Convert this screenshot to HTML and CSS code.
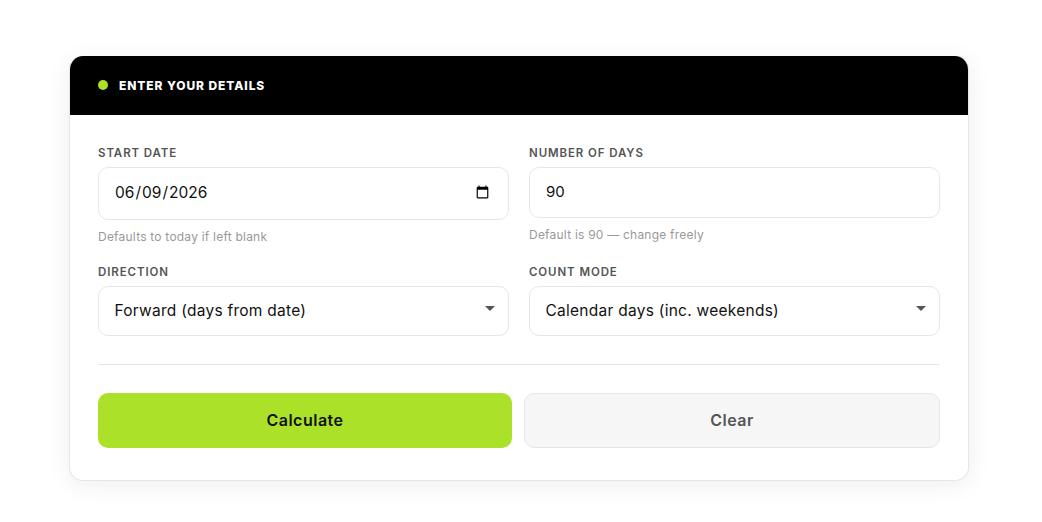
FILE: index.html
```html
<!DOCTYPE html>
<html lang="en">

<head>
    <meta charset="UTF-8">
    <meta name="viewport" content="width=device-width, initial-scale=1.0">
    <title>Date Calculator</title>
    <link rel="stylesheet" href="styles.css">
</head>

<body>

    <div class="card">
        <!-- Card Header -->
        <div class="card-header">
            <span class="dot"></span>
            <h2>Enter Your Details</h2>
        </div>

        <div class="card-body">
            <!-- Form Fields -->
            <div class="form-grid">
                <div class="field">
                    <label for="start-date">Start Date</label>
                    <input type="date" id="start-date" class="date-input" value="2026-06-09">
                    <p class="hint">Defaults to today if left blank</p>
                </div>
                <div class="field">
                    <label for="num-days">Number of Days</label>
                    <input type="number" id="num-days" class="num-input" value="90">
                    <p class="hint">Default is 90 — change freely</p>
                </div>
                <div class="field">
                    <label for="direction">Direction</label>
                    <div class="select-wrap">
                        <select id="direction">
                            <option>Forward (days from date)</option>
                            <option>Backward (days before date)</option>
                        </select>
                    </div>
                </div>
                <div class="field">
                    <label for="count-mode">Count Mode</label>
                    <div class="select-wrap">
                        <select id="count-mode">
                            <option>Calendar days (inc. weekends)</option>
                            <option>Business days (exc. weekends)</option>
                        </select>
                    </div>
                </div>
            </div>

            <hr class="divider">

            <!-- Actions -->
            <div class="actions">
                <button class="btn btn-calc">Calculate</button>
                <button class="btn btn-clear">Clear</button>
            </div>
        </div>
    </div>

</body>

</html>
```

FILE: styles.css
```css
/* General Styles */
body {
    font-family: Inter, "Liberation Sans", sans-serif;
    margin: 0;
    padding: 56px 0 40px 69px;
    background-color: #fff;
    color: #111;
}

/* Card */
.card {
    width: 898px;
    background-color: #fff;
    border: 1px solid #e6e6e6;
    border-top: none;
    border-radius: 14px;
    box-shadow: 0 4px 24px rgba(0, 0, 0, 0.07);
    overflow: hidden;
}

.card-header {
    display: flex;
    align-items: center;
    gap: 11px;
    height: 59px;
    padding: 0 28px;
    background-color: #000;
}

.card-header h2 {
    margin: 0;
    color: #fff;
    font-size: 12px;
    font-weight: 800;
    letter-spacing: 0.9px;
    text-transform: uppercase;
}

.dot {
    width: 10px;
    height: 10px;
    margin-top: -1px;
    border-radius: 50%;
    background-color: #abe128;
}

.card-body {
    padding: 31px 28px 32px;
}

/* Form */
.form-grid {
    display: grid;
    grid-template-columns: 411px 411px;
    column-gap: 20px;
    row-gap: 20px;
}

.field label {
    display: block;
    margin-bottom: 7px;
    color: #555;
    font-size: 11.5px;
    line-height: 14px;
    font-weight: 600;
    letter-spacing: 0.9px;
    text-transform: uppercase;
}

.field input,
.field select {
    display: block;
    box-sizing: border-box;
    width: 100%;
    height: 53px;
    padding: 0 16px 2px;
    border: 1px solid #e6e6e6;
    border-radius: 10px;
    background-color: #fff;
    color: #111;
    font-family: inherit;
    font-size: 15px;
}

.field .date-input {
    padding-left: 15px;
    font-size: 15.5px;
}

.field .num-input {
    height: 51px;
}

.field select {
    height: 50px;
    padding-left: 15.5px;
    font-size: 15.5px;
    letter-spacing: 0.26px;
    appearance: none;
}

.select-wrap {
    position: relative;
}

/* Dropdown arrow */
.select-wrap::after {
    content: "";
    position: absolute;
    top: 20px;
    right: 14px;
    border-left: 5px solid transparent;
    border-right: 5px solid transparent;
    border-top: 5px solid #555;
    pointer-events: none;
}

.hint {
    margin: 9px 0 0;
    color: #999;
    font-size: 12px;
    line-height: 16px;
    letter-spacing: 0.22px;
}

.divider {
    height: 1px;
    margin: 28px 0;
    border: none;
    background-color: #e6e6e6;
}

/* Buttons */
.actions {
    display: flex;
    gap: 12px;
}

.btn {
    height: 55px;
    padding-bottom: 3px;
    border-radius: 10px;
    font-family: inherit;
    font-size: 16px;
    font-weight: 600;
    letter-spacing: 0.5px;
    cursor: pointer;
}

.btn-calc {
    flex: 0 0 414px;
    border: none;
    background-color: #abe128;
    color: #111;
}

.btn-clear {
    flex: 1;
    border: 1px solid #e6e6e6;
    background-color: #f6f6f6;
    color: #555;
}
```
